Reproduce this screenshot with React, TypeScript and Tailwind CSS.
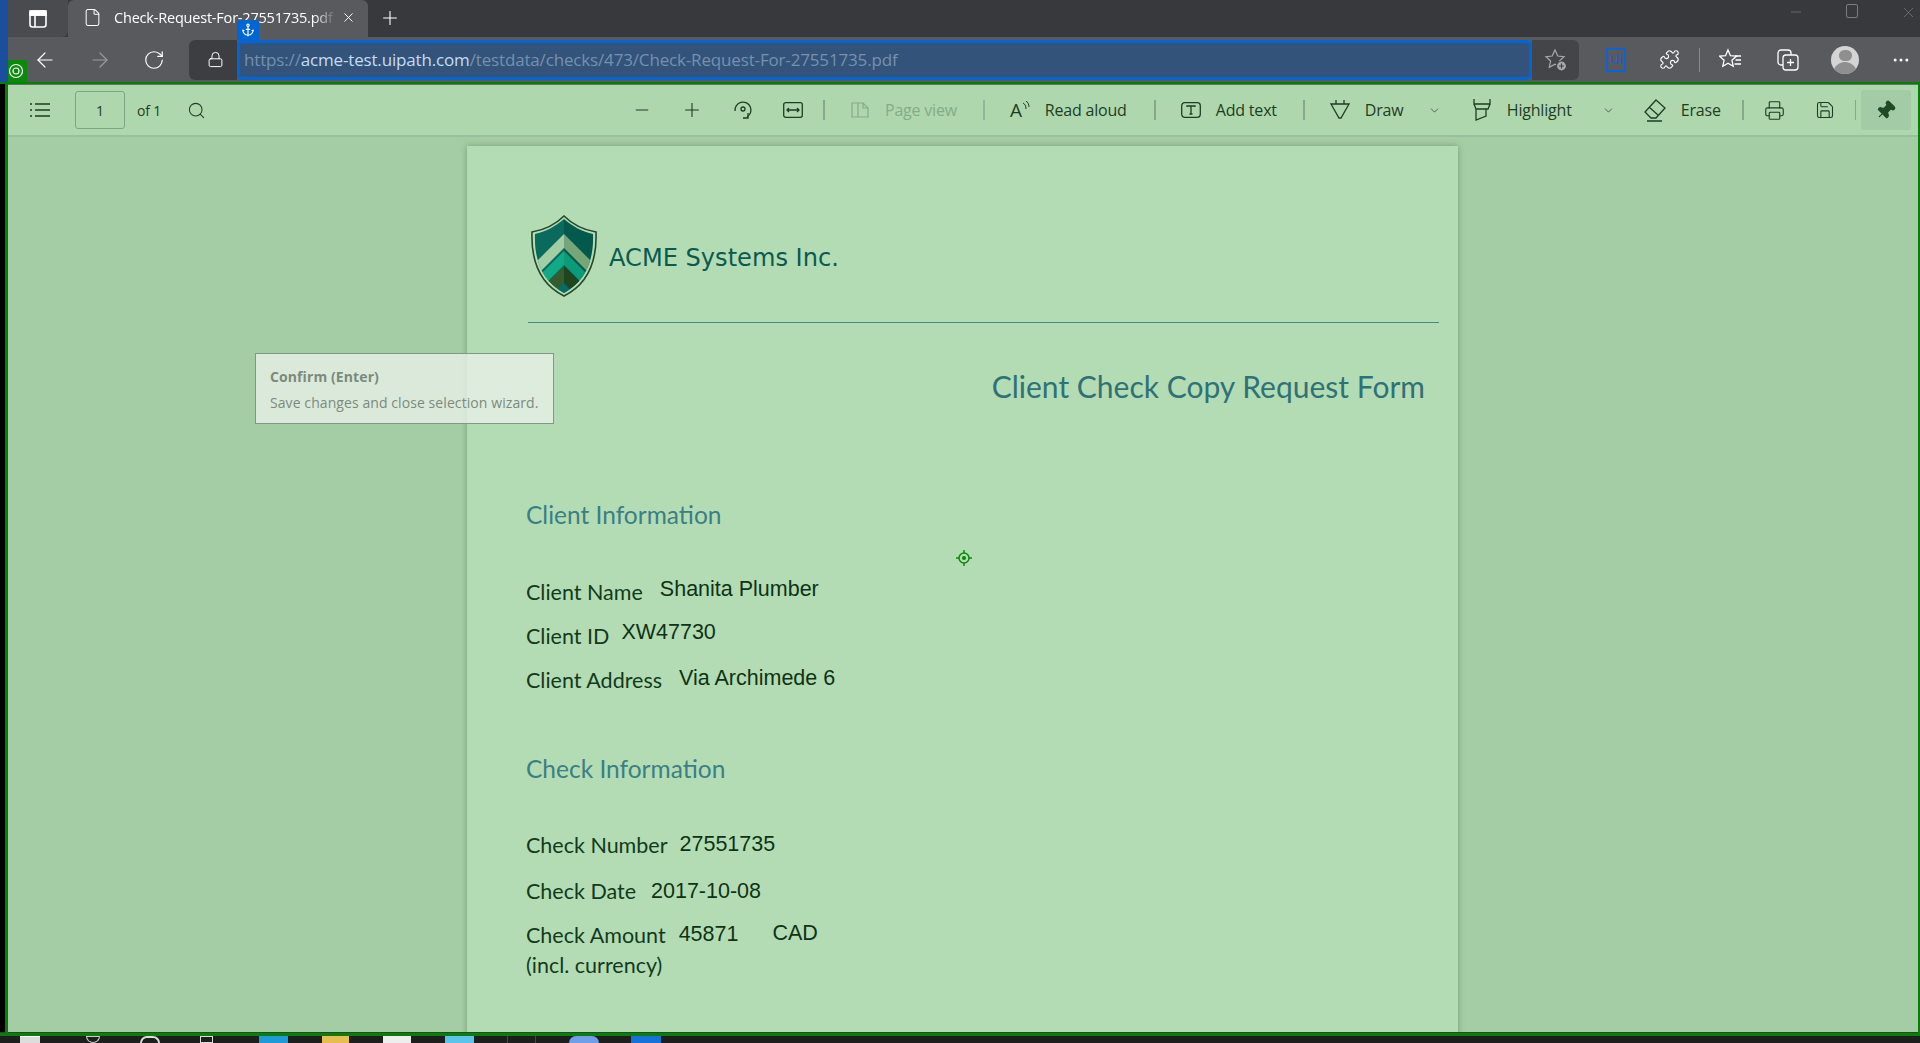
import React from "react";
import { ArrowLeft, ArrowRight, RotateCw, Lock, Plus, X, Minus, Search, ChevronDown, Anchor, MoreHorizontal, Printer, Save, Pin, File, Puzzle } from "lucide-react";

const Sep = ({ cls }: { cls: string }) => <div className={`h-[20px] w-[2px] bg-[#85a888] ${cls}`} />;

function Shield() {
  return (
    <svg width="66" height="82" viewBox="-1 -1 66 82" className="shrink-0">
      <defs>
        <clipPath id="sh"><path d="M32 3C40 10 51 16 61 18C62 44 54 65 32 77C10 65 2 44 3 18C13 16 24 10 32 3Z" /></clipPath>
      </defs>
      <path d="M32 0C40 8 52 14 64 16C65 44 56 68 32 80C8 68 -1 44 0 16C12 14 24 8 32 0Z" fill="#b4dcb4" stroke="#24482a" strokeWidth="1.6" />
      <g clipPath="url(#sh)">
        <rect x="0" y="0" width="32" height="80" fill="#0a6a5e" />
        <rect x="32" y="0" width="32" height="80" fill="#035a4c" />
        <path d="M32 18L-8 58V72L32 32Z" fill="#a3cda3" />
        <path d="M32 18L72 58V72L32 32Z" fill="#77a577" />
        <path d="M32 35L-8 75V89L32 49Z" fill="#10ab86" />
        <path d="M32 35L72 75V89L32 49Z" fill="#0c9a77" />
        <path d="M32 50L-8 90V106L32 66Z" fill="#355c2e" />
        <path d="M32 50L72 90V106L32 66Z" fill="#20451c" />
        <path d="M32 68L12 88H52Z" fill="#0a6a64" />
      </g>
    </svg>
  );
}

const Row = ({ label, value, vcls, extra, lcls }: { label: string; value: string; vcls: string; extra?: string; lcls: string }) => (
  <div className={`flex items-start ${lcls}`}>
    <span className="font-['Lato',sans-serif] text-[21.5px] leading-[26px] text-[#123a1c]">{label}</span>
    <span className={`font-['Liberation_Sans',sans-serif] text-[21.5px] leading-[26px] text-[#0e3314] ${vcls}`}>{value}</span>
    {extra && <span className="ml-[34px] -mt-[2px] font-['Liberation_Sans',sans-serif] text-[21.5px] leading-[26px] text-[#0e3314]">{extra}</span>}
  </div>
);

export default function App() {
  const ic = "text-[#1f3d24] shrink-0";
  return (
    <div className="relative flex h-[1043px] w-[1920px] flex-col overflow-hidden bg-[#1e1e1e] font-['Open_Sans',sans-serif]">
      {/* tab strip */}
      <div className="flex h-[37px] shrink-0 items-stretch bg-[#38393d] pl-[8px]">
        <div className="flex w-[60px] items-center justify-center rounded-br-[6px] bg-[#4a4b4f] text-white">
          <svg width="18" height="18" viewBox="0 0 18 18" fill="none" stroke="#fff" strokeWidth="1.6"><rect x="1" y="1" width="16" height="16" rx="2.5" /><path d="M1 5h16M6 5v12" /><rect x="1" y="1" width="16" height="4" fill="#fff" /></svg>
        </div>
        <div className="flex w-[300px] items-center rounded-t-[6px] bg-[#595a5e] pb-[2px] pl-[15px] text-white">
          <File size={19} strokeWidth={1.3} />
          <span className="ml-[12px] w-[222px] overflow-hidden whitespace-nowrap text-[14.5px] tracking-[-0.2px] text-[#fff] [mask-image:linear-gradient(to_right,#000_90%,transparent)]">Check-Request-For-27551735.pdf</span>
          <X size={15} strokeWidth={1.5} className="ml-[5px]" />
        </div>
        <div className="ml-[11px] flex items-center pb-[2px] text-white"><Plus size={22} strokeWidth={1.2} /></div>
        <div className="ml-auto flex items-start gap-[42px] pr-[3px] pt-[4px] text-[#7b7c80]">
          <Minus size={16} strokeWidth={1} />
          <svg width="12" height="14" viewBox="0 0 12 14" fill="none" stroke="#7b7c80"><rect x="0.5" y="0.5" width="11" height="13" rx="1.5" /></svg>
          <X size={17} strokeWidth={1} />
        </div>
      </div>
      {/* browser toolbar */}
      <div className="flex h-[45px] shrink-0 items-center bg-[#595a5e] pl-[33px] text-white">
        <ArrowLeft size={24} strokeWidth={1.2} />
        <ArrowRight size={24} strokeWidth={1.2} className="ml-[31px] text-[#9a9b9e]" />
        <RotateCw size={22} strokeWidth={1.3} className="ml-[31px]" />
        <div className="ml-[24px] flex h-[40px] w-[48px] items-center justify-center rounded-l-[6px] bg-[#3d3e42] pl-[4px]"><Lock size={17} strokeWidth={1.4} /></div>
        <div className="flex h-[40px] w-[1295px] items-center rounded-[5px] border-[3px] border-[#0066d6] bg-[#33537a] pl-[4px] text-[17px] tracking-[-0.16px] text-[#7690ae]">
          https://<span className="text-[#c4dcf5]">acme-test.uipath.com</span>/testdata/checks/473/Check-Request-For-27551735.pdf
        </div>
        <div className="flex h-[40px] w-[47px] items-center justify-center rounded-r-[6px] bg-[#444549]">
          <svg width="24" height="24" viewBox="0 0 24 24" fill="none" stroke="#a8a9ac" strokeWidth="1.2"><path d="M11 2l2.800 6 6.200 .7-4.600 4.300 1.300 6.300L11 16.200 5.300 19.300l1.300-6.300L2 8.700l6.200-.7z" /><circle cx="17.500" cy="18" r="5" fill="#a8a9ac" stroke="#444549" /><path d="M17.500 15.500v5M15 18h5" stroke="#444549" /></svg>
        </div>
        <div className="ml-[27px] flex h-[24px] w-[20px] items-center justify-center border-[2px] border-[#0e63cf] text-[13px] leading-none text-[#0e63cf]">Ui</div>
        <Puzzle size={21} strokeWidth={1.3} className="ml-[33px]" />
        <div className="ml-[19px] h-[24px] w-[1px] bg-[#8a8b8e]" />
        <svg width="24" height="24" viewBox="0 0 24 24" fill="none" stroke="#fff" strokeWidth="1.3" className="ml-[19px]"><path d="M9 2l2.400 5.600 6 .6-4.500 4 1.300 6L9 15.200 3.800 18.200l1.300-6-4.500-4 6-.6z" /><path d="M16 8h6M16.500 12h5.500M15.500 16h6.500" /></svg>
        <svg width="22" height="24" viewBox="0 0 22 24" fill="none" stroke="#fff" strokeWidth="1.3" className="ml-[34px]"><rect x="1" y="2" width="13" height="15" rx="3" /><rect x="6" y="7" width="15" height="15" rx="3" fill="#595a5e" /><path d="M13.500 11v7M10 14.500h7" /></svg>
        <div className="ml-[32px] flex h-[28px] w-[28px] flex-col items-center overflow-hidden rounded-full bg-[#d4d4d4]">
          <div className="mt-[4px] h-[13px] w-[13px] rounded-full bg-[#8f8f8f]" />
          <div className="mt-[1px] h-[14px] w-[24px] rounded-t-full bg-[#8f8f8f]" />
        </div>
        <MoreHorizontal size={20} strokeWidth={1.6} className="ml-[32px]" />
      </div>
      {/* frame line */}
      <div className="h-[2px] shrink-0 bg-[#0a7d0a]" />
      <div className="flex min-h-0 flex-1 border-l-[8px] border-black">
        <div className="flex min-w-0 flex-1 flex-col">
          {/* pdf toolbar */}
          <div className="flex h-[53px] shrink-0 items-center border-t-[1px] border-b-[2px] border-t-[#5a7a5e] border-b-[#98c09c] bg-[#aed7ae] text-[16px] tracking-[-0.2px] text-[#1f3d24]">
            <svg width="20" height="14" viewBox="0 0 20 14" fill="none" stroke="#1f3d24" strokeWidth="1.3" className="ml-[22px] shrink-0"><path d="M0 1h2M5 1h15M0 7h2M5 7h15M0 13h2M5 13h15" /></svg>
            <div className="ml-[25px] flex h-[38px] w-[50px] shrink-0 items-center justify-center rounded-[3px] border border-[#7ea582] text-[14px]">1</div>
            <span className="ml-[12px] shrink-0 whitespace-nowrap text-[14px]">of 1</span>
            <Search size={19} strokeWidth={1.3} className={`ml-[26px] ${ic}`} />
            <Minus size={20} strokeWidth={1.2} className={`ml-[426px] ${ic}`} />
            <Plus size={22} strokeWidth={1.2} className={`ml-[29px] ${ic}`} />
            <svg width="20" height="22" viewBox="0 0 20 22" fill="none" stroke="#1f3d24" strokeWidth="1.3" className="ml-[30px] shrink-0"><path d="M2 12A8 8 0 1 1 14 18" /><circle cx="10" cy="10" r="2" /><path d="M15 14v5h-5" /></svg>
            <svg width="20" height="16" viewBox="0 0 20 16" fill="none" stroke="#1f3d24" strokeWidth="1.3" className="ml-[30px] shrink-0"><rect x="0.7" y="0.7" width="18.6" height="14.6" rx="2" /><path d="M4 8h12M6 6L4 8l2 2M14 6l2 2-2 2" /></svg>
            <Sep cls="ml-[20px]" />
            <svg width="20" height="20" viewBox="0 0 20 20" fill="none" stroke="#85ab88" strokeWidth="1.2" className="ml-[25px] shrink-0"><path d="M8 3H2v14h6M8 3h5l5 5v9H8zM13 3v5h5" /></svg>
            <span className="ml-[15px] w-[77px] whitespace-nowrap text-[#85ab88]">Page view</span>
            <Sep cls="ml-[21px] bg-[#93b996]" />
            <span className="ml-[25px] text-[19px] leading-none">A</span>
            <svg width="8" height="10" viewBox="0 0 8 10" fill="none" stroke="#1f3d24" strokeWidth="1" className="-mt-[8px] shrink-0"><path d="M1 2c2 1 3 3 3 6M4 0c2 1 3 4 3 6" /></svg>
            <span className="ml-[15px] w-[87px] whitespace-nowrap">Read aloud</span>
            <Sep cls="ml-[22px]" />
            <svg width="20" height="16" viewBox="0 0 20 16" fill="none" stroke="#1f3d24" strokeWidth="1.3" className="ml-[25px] shrink-0"><rect x="0.7" y="0.7" width="18.6" height="14.6" rx="3" /><path d="M6 5V4h8v1M10 4v8M8.500 12h3" /></svg>
            <span className="ml-[15px] w-[67px] whitespace-nowrap">Add text</span>
            <Sep cls="ml-[20px]" />
            <svg width="20" height="22" viewBox="0 0 20 22" fill="none" stroke="#1f3d24" strokeWidth="1.3" className="ml-[25px] shrink-0"><path d="M1 5h18L11 19H9zM6 5V1M14 5V1" /></svg>
            <span className="ml-[15px] w-[40px] whitespace-nowrap">Draw</span>
            <ChevronDown size={13} strokeWidth={1.3} className={`ml-[23px] ${ic}`} />
            <svg width="20" height="24" viewBox="0 0 20 24" fill="none" stroke="#1f3d24" strokeWidth="1.3" className="ml-[31px] shrink-0"><path d="M2 1v5h16V1M2 6l2 5h12l2-5M4 11v11l10-4v-7" /></svg>
            <span className="ml-[15px] w-[72px] whitespace-nowrap">Highlight</span>
            <ChevronDown size={13} strokeWidth={1.3} className={`ml-[23px] ${ic}`} />
            <svg width="22" height="24" viewBox="0 0 22 24" fill="none" stroke="#1f3d24" strokeWidth="1.3" className="ml-[29px] shrink-0"><path d="M12 2l9 8-9 10H7l-6-6zM5 9l9 8M3 23h15" /></svg>
            <span className="ml-[15px] w-[41px] whitespace-nowrap">Erase</span>
            <Sep cls="ml-[20px]" />
            <Printer size={21} strokeWidth={1.3} className={`ml-[20px] ${ic}`} />
            <Save size={20} strokeWidth={1.3} className={`ml-[30px] ${ic}`} />
            <div className="ml-[20px] h-[20px] w-[1px] shrink-0 bg-[#85a888]" />
            <div className="ml-[5px] flex h-[40px] w-[50px] shrink-0 items-center justify-center rounded-[3px] bg-[#a3cba5]">
              <Pin size={21} strokeWidth={1.4} fill="#1f4a26" className="rotate-45 text-[#1f4a26]" />
            </div>
          </div>
          {/* pdf canvas */}
          <div className="flex min-h-0 flex-1 justify-center overflow-hidden bg-[#a5cda5] pt-[9px]">
            <div className="ml-[-3px] h-[1000px] w-[991px] shrink-0 bg-[#b4dcb4] shadow-[0_0_6px_rgba(60,100,60,0.45)]">
              <div className="ml-[64px] mt-[69px] flex items-center">
                <Shield />
                <span className="ml-[12px] mt-[4px] font-['DejaVu_Sans',sans-serif] text-[24.1px] leading-none text-[#0b5a50]">ACME Systems Inc.</span>
              </div>
              <div className="ml-[61px] mt-[25px] mr-[19px] h-[1px] bg-[#3f8a8a]" />
              <div className="mt-[43px] mr-[33px] text-right font-['Lato',sans-serif] text-[30px] leading-[40px] text-[#2f7276]">Client Check Copy Request Form</div>
              <div className="ml-[59px] mt-[93px] font-['Lato',sans-serif] text-[24.5px] leading-[32px] text-[#3a7f84]">Client Information</div>
              <div className="ml-[59px] mt-[48px]">
                <Row label="Client Name" value="Shanita Plumber" vcls="ml-[17px] -mt-[3px]" lcls="h-[44px]" />
                <Row label="Client ID" value="XW47730" vcls="ml-[12px] -mt-[4px]" lcls="h-[44px]" />
                <Row label="Client Address" value="Via Archimede 6" vcls="ml-[17px] -mt-[2px]" lcls="h-[44px]" />
              </div>
              <div className="ml-[59px] mt-[42px] font-['Lato',sans-serif] text-[24.5px] leading-[32px] text-[#3a7f84]">Check Information</div>
              <div className="ml-[59px] pt-[47px]">
                <Row label="Check Number" value="27551735" vcls="ml-[12px] -mt-[1px]" lcls="h-[46px]" />
                <Row label="Check Date" value="2017-10-08" vcls="ml-[15px]" lcls="h-[44px]" />
                <Row label="Check Amount" value="45871" vcls="ml-[13px] -mt-[1px]" extra="CAD" lcls="h-[30px]" />
                <div className="font-['Lato',sans-serif] text-[21.5px] leading-[26px] text-[#123a1c]">(incl. currency)</div>
              </div>
            </div>
          </div>
        </div>
      </div>
      {/* taskbar */}
      <div className="h-[1px] shrink-0 bg-[#1c4f20]" />
      <div className="relative flex h-[10px] shrink-0 items-end border-t-[3px] border-[#0a7d0a] bg-[#1e1e1e]">
        <div className="ml-[20px] h-[7px] w-[20px] border-t border-white bg-[#ddd]" />
        <div className="ml-[46px] h-[7px] w-[14px] rounded-b-full border border-[#ccc]" />
        <div className="ml-[40px] h-[7px] w-[20px] rounded-t-full border-2 border-b-0 border-[#ddd]" />
        <div className="ml-[40px] h-[7px] w-[13px] border border-[#ddd]" />
        <div className="ml-[46px] h-[7px] w-[29px] bg-[#1f9ad8]" />
        <div className="ml-[34px] h-[7px] w-[27px] bg-[#e6bd4e]" />
        <div className="ml-[34px] h-[7px] w-[28px] bg-[#eee]" />
        <div className="ml-[34px] h-[7px] w-[29px] bg-[#5cc3ea]" />
        <div className="ml-[33px] h-[7px] w-[29px] border-x border-[#b01838]" />
        <div className="ml-[33px] h-[7px] w-[30px] rounded-t-full bg-[#6f9fe8]" />
        <div className="ml-[32px] h-[7px] w-[30px] bg-[#1672d8]" />
      </div>
      {/* automation overlays */}
      <div className="absolute left-[237px] top-[20px] flex h-[20px] w-[22px] items-start justify-center rounded-t-[3px] bg-[#0066d6] pt-[3px] text-white"><Anchor size={14} strokeWidth={2} /></div>
      <div className="absolute left-[5px] top-[60px] flex h-[22px] w-[22px] items-center justify-center rounded-t-[3px] bg-[#0a8a0a] text-white">
        <svg width="16" height="16" viewBox="0 0 16 16" fill="none" stroke="#fff" strokeWidth="1.2"><circle cx="8" cy="8" r="6.5" /><circle cx="8" cy="8" r="3" /></svg>
      </div>
      <div className="absolute left-[0px] top-[0px] h-[82px] w-[8px] bg-[#1c4ea0]" />
      <div className="absolute left-[5px] top-[82px] h-[951px] w-[3px] bg-[#0a7d0a]" />
      <div className="absolute right-[0px] top-[82px] h-[951px] w-[2px] bg-[#0a7d0a]" />
      <div className="absolute left-[956px] top-[550px]">
        <svg width="16" height="16" viewBox="0 0 16 16" fill="none" stroke="#0a8a0a" strokeWidth="1.5"><circle cx="8" cy="8" r="5" /><circle cx="8" cy="8" r="1.300" fill="#0a8a0a" /><path d="M8 0v3M8 13v3M0 8h3M13 8h3" /></svg>
      </div>
      <div className="absolute left-[255px] top-[353px] h-[71px] w-[299px] border-[1.5px] border-[#7f9a84] bg-[#e8f0e8]/80 pl-[14px] pt-[10px] text-[14px] leading-[26px] text-[#7b8a7c]">
        <div className="font-bold tracking-[0.1px]">Confirm (Enter)</div>
        <div className="whitespace-nowrap tracking-[0.08px]">Save changes and close selection wizard.</div>
      </div>
    </div>
  );
}
